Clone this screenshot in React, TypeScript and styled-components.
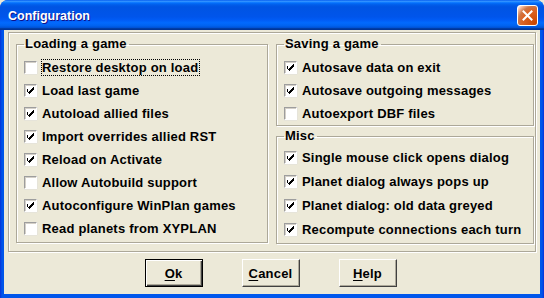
import styled, { createGlobalStyle } from "styled-components";

const GlobalStyle = createGlobalStyle`
  html, body {
    margin: 0;
    padding: 0;
    background: #ece9d8;
  }
  body {
    font-family: "Liberation Sans", Arial, sans-serif;
  }
`;

const Window = styled.div`
  width: 544px;
  height: 298px;
  box-sizing: border-box;
  display: flex;
  flex-direction: column;
  background: linear-gradient(to right, #0831d9 0px, #0055ea 2px, #0058ee 50%, #0055ea calc(100% - 2px), #0831d9 100%);
  border-radius: 8px 8px 0 0;
  overflow: hidden;
`;

const TitleBar = styled.div`
  height: 30px;
  flex: none;
  display: flex;
  align-items: center;
  justify-content: space-between;
  padding: 1px 7px 0 8px;
  box-sizing: border-box;
  background: linear-gradient(
    to bottom,
    #0058ee 0%,
    #3593ff 4%,
    #288eff 6%,
    #127dff 8%,
    #036ffc 10%,
    #0262ee 14%,
    #0057e5 20%,
    #0054e3 24%,
    #0055eb 56%,
    #005bf5 66%,
    #026afe 76%,
    #0062ef 86%,
    #0052d6 92%,
    #0040ab 94%,
    #003092 100%
  );
`;

const Title = styled.span`
  color: #fff;
  font: bold 12.5px "Liberation Sans", Arial, sans-serif;
  text-shadow: 1px 1px #0f1089;
`;

const CloseButton = styled.div`
  width: 21px;
  height: 21px;
  box-sizing: border-box;
  border: 1px solid #fff;
  border-radius: 3px;
  display: flex;
  align-items: center;
  justify-content: center;
  margin-right: -1px;
  background: radial-gradient(
    circle at 90% 90%,
    #cc4600 0%,
    #dc6527 55%,
    #cd7546 70%,
    #ffccb2 90%,
    #fff 100%
  );
`;

const Client = styled.div`
  flex: 1;
  margin: 0 4px 4px;
  background: #ece9d8;
  padding: 2px 4px 0;
  display: flex;
  flex-direction: column;
`;

const Frame = styled.div`
  height: 220px;
  box-sizing: border-box;
  border: 1px solid #aca899;
  box-shadow: inset 1px 1px #fff, 1px 1px #fff;
  padding: 3px 0 0 7px;
  display: grid;
  grid-template-columns: 252px 258px;
  column-gap: 8px;
  align-items: start;
`;

const Column = styled.div`
  display: flex;
  flex-direction: column;
  gap: 2px;
`;

const Group = styled.fieldset<{ $rowH: number; $padBottom: number }>`
  margin: 0;
  padding: 0 0 ${(p) => p.$padBottom}px 7px;
  border: 1px solid #aca899;
  box-shadow: inset 1px 1px #fff, 1px 1px #fff;
  min-width: 0;
  --row-h: ${(p) => p.$rowH}px;
`;

const Legend = styled.legend`
  font: bold 13px "Liberation Sans", Arial, sans-serif;
  letter-spacing: 0.2px;
  line-height: 16px;
  padding: 0 2px 0 1px;
  margin: 0;
  color: #000;
`;

const Rows = styled.div<{ $top: number }>`
  padding-top: ${(p) => p.$top}px;
  display: flex;
  flex-direction: column;
`;

const Row = styled.div`
  height: var(--row-h);
  display: flex;
  align-items: center;
  gap: 4px;
`;

const Box = styled.span`
  width: 13px;
  height: 13px;
  box-sizing: border-box;
  flex: none;
  background: #fff;
  border-top: 1px solid #9d9d9d;
  border-left: 1px solid #9d9d9d;
  border-bottom: 1px solid #fff;
  border-right: 1px solid #fff;
  box-shadow: inset 1px 1px #d4d0c8, 0 1px #e6e4da, 1px 0 #e6e4da;
  display: flex;
  align-items: center;
  justify-content: center;
`;

const Label = styled.span<{ $focus?: boolean }>`
  font: bold 13px "Liberation Sans", Arial, sans-serif;
  letter-spacing: 0.2px;
  color: #000;
  line-height: 15px;
  border: 1px dotted ${(p) => (p.$focus ? "#000" : "transparent")};
  padding: 0 1px 0 0;
  white-space: nowrap;
`;

const Buttons = styled.div`
  display: flex;
  justify-content: center;
  gap: 39px;
  padding-top: 7px;
  padding-right: 3px;
`;

const Button = styled.div<{ $default?: boolean }>`
  width: 58px;
  height: 28px;
  box-sizing: border-box;
  display: flex;
  align-items: center;
  justify-content: center;
  font: bold 13px "Liberation Sans", Arial, sans-serif;
  letter-spacing: 0.2px;
  color: #000;
  background: #ece9d8;
  border: 1px solid;
  border-color: ${(p) => (p.$default ? "#000" : "#fff #404040 #404040 #fff")};
  box-shadow: ${(p) =>
    p.$default
      ? "inset 1px 1px #fff, inset -1px -1px #404040, inset -2px -2px #aca899"
      : "inset -1px -1px #aca899"};

  u {
    text-decoration-thickness: 1px;
    text-underline-offset: 2px;
  }
`;

function Check() {
  return (
    <svg width="7" height="7" viewBox="0 0 7 7">
      <path d="M0 2h1v3h1v-1h1v-1h1v-1h1v-1h1v-1h1v3h-1v1h-1v1h-1v1h-1v1h-1v-1h-1v-1h-1z" fill="#000" />
    </svg>
  );
}

function CheckRow({ label, checked, focus }: { label: string; checked: boolean; focus?: boolean }) {
  return (
    <Row>
      <Box>{checked && <Check />}</Box>
      <Label $focus={focus}>{label}</Label>
    </Row>
  );
}

const loading = [
  { label: "Restore desktop on load", checked: false, focus: true },
  { label: "Load last game", checked: true },
  { label: "Autoload allied files", checked: true },
  { label: "Import overrides allied RST", checked: true },
  { label: "Reload on Activate", checked: true },
  { label: "Allow Autobuild support", checked: false },
  { label: "Autoconfigure WinPlan games", checked: true },
  { label: "Read planets from XYPLAN", checked: false },
];

const saving = [
  { label: "Autosave data on exit", checked: true },
  { label: "Autosave outgoing messages", checked: true },
  { label: "Autoexport DBF files", checked: false },
];

const misc = [
  { label: "Single mouse click opens dialog", checked: true },
  { label: "Planet dialog always pops up", checked: true },
  { label: "Planet dialog: old data greyed", checked: true },
  { label: "Recompute connections each turn", checked: true },
];

export default function App() {
  return (
    <>
      <GlobalStyle />
      <Window>
        <TitleBar>
          <Title>Configuration</Title>
          <CloseButton>
            <svg width="11" height="11" viewBox="0 0 11 11">
              <path d="M1.5 1.5l8 8M9.5 1.5l-8 8" stroke="#fff" strokeWidth="2" strokeLinecap="square" />
            </svg>
          </CloseButton>
        </TitleBar>
        <Client>
          <Frame>
            <Group $rowH={23} $padBottom={2}>
              <Legend>Loading a game</Legend>
              <Rows $top={4}>
                {loading.map((r) => (
                  <CheckRow key={r.label} {...r} />
                ))}
              </Rows>
            </Group>
            <Column>
              <Group $rowH={23} $padBottom={0}>
                <Legend>Saving a game</Legend>
                <Rows $top={4}>
                  {saving.map((r) => (
                    <CheckRow key={r.label} {...r} />
                  ))}
                </Rows>
              </Group>
              <Group $rowH={24} $padBottom={2}>
                <Legend>Misc</Legend>
                <Rows $top={1}>
                  {misc.map((r) => (
                    <CheckRow key={r.label} {...r} />
                  ))}
                </Rows>
              </Group>
            </Column>
          </Frame>
          <Buttons>
            <Button $default>
              <span>
                <u>O</u>k
              </span>
            </Button>
            <Button>
              <span>
                <u>C</u>ancel
              </span>
            </Button>
            <Button>
              <span>
                <u>H</u>elp
              </span>
            </Button>
          </Buttons>
        </Client>
      </Window>
    </>
  );
}
